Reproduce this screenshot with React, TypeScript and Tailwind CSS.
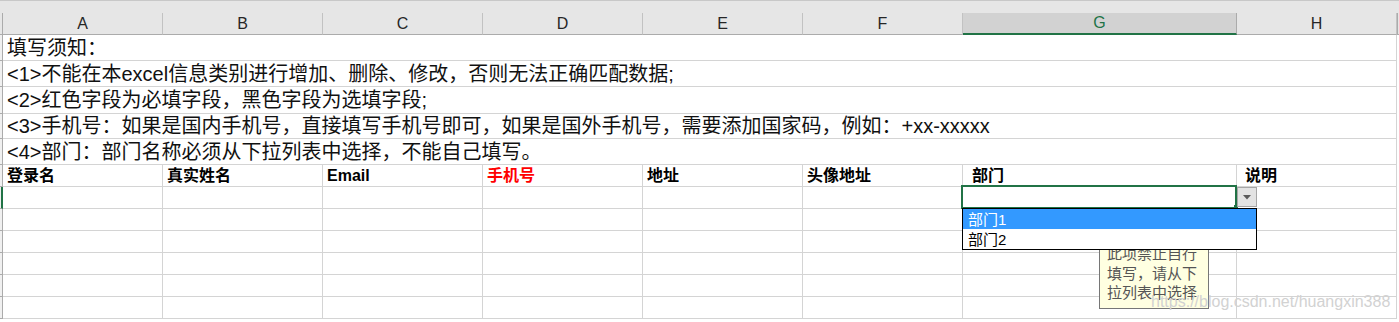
import React from 'react';

const FONT = '"Liberation Sans", "Noto Sans CJK SC", sans-serif';

const COLS = [
  { label: 'A', w: 'w-[160px]' },
  { label: 'B', w: 'w-[160px]' },
  { label: 'C', w: 'w-[160px]' },
  { label: 'D', w: 'w-[160px]' },
  { label: 'E', w: 'w-[160px]' },
  { label: 'F', w: 'w-[160px]' },
  { label: 'G', w: 'w-[274px]' },
  { label: 'H', w: 'w-[160px]' },
];

const NOTES = [
  '填写须知：',
  '<1>不能在本excel信息类别进行增加、删除、修改，否则无法正确匹配数据;',
  '<2>红色字段为必填字段，黑色字段为选填字段;',
  '<3>手机号：如果是国内手机号，直接填写手机号即可，如果是国外手机号，需要添加国家码，例如：+xx-xxxxx',
  '<4>部门：部门名称必须从下拉列表中选择，不能自己填写。',
];
const NOTE_HEIGHTS = ['h-[26px]', 'h-[26px]', 'h-[27px]', 'h-[25px]', 'h-[26px]'];

const FIELDS = [
  { text: '登录名', pad: 'pl-[4px]' },
  { text: '真实姓名', pad: 'pl-[4px]' },
  { text: 'Email', pad: 'pl-[4px]' },
  { text: '手机号', pad: 'pl-[4px]', red: true },
  { text: '地址', pad: 'pl-[4px]' },
  { text: '头像地址', pad: 'pl-[4px]' },
  { text: '部门', pad: 'pl-[9px]' },
  { text: '说明', pad: 'pl-[8px]' },
];

function RowHead({ selected }: { selected?: boolean }) {
  return (
    <div
      className={
        selected
          ? 'w-[3px] flex-none bg-[#f0f0f0] border-r-2 border-r-[#217346] border-b border-b-[#ababab]'
          : 'w-[3px] flex-none bg-[#f0f0f0] border-r border-b border-[#ababab]'
      }
    />
  );
}

function EmptyRow({ selected }: { selected?: boolean }) {
  return (
    <div className="flex h-[22px]">
      <RowHead selected={selected} />
      {COLS.map((c) => (
        <div key={c.label} className={`${c.w} flex-none border-r border-b border-[#d4d4d4]`} />
      ))}
    </div>
  );
}

export default function App() {
  return (
    <div
      className="relative w-[1399px] h-[322px] overflow-hidden bg-white text-black"
      style={{ fontFamily: FONT }}
    >
      {/* ribbon edge */}
      <div className="h-[13px] bg-[#e6e6e6] border-t border-[#c8c8c8]" />

      {/* column letters */}
      <div className="flex h-[22px] bg-[#e6e6e6]">
        <div className="w-[3px] flex-none border-r border-b border-[#ababab]" />
        {COLS.map((c) =>
          c.label === 'G' ? (
            <div
              key={c.label}
              className={`${c.w} flex-none flex items-center justify-center bg-[#d2d2d2] border-r border-r-[#ababab] border-b-2 border-b-[#217346] text-[16px] text-[#217346]`}
            >
              {c.label}
            </div>
          ) : (
            <div
              key={c.label}
              className={`${c.w} flex-none flex items-center justify-center border-r border-r-[#c2c2c2] border-b border-b-[#ababab] text-[16px] text-[#262626]`}
            >
              {c.label}
            </div>
          ),
        )}
        <div className="flex-1 border-l border-b border-[#ababab]" />
      </div>

      {/* merged instruction rows */}
      {NOTES.map((t, i) => (
        <div key={i} className={`flex ${NOTE_HEIGHTS[i]}`}>
          <RowHead />
          <div className="w-[1394px] flex-none flex items-center pl-[4px] border-r border-b border-[#d4d4d4] text-[20px] leading-none whitespace-nowrap text-[#111]">
            {t}
          </div>
        </div>
      ))}

      {/* field headers */}
      <div className="flex h-[22px]">
        <RowHead />
        {COLS.map((c, i) => (
          <div
            key={c.label}
            className={`${c.w} flex-none flex items-center ${FIELDS[i].pad} border-r border-b border-[#d4d4d4] text-[16px] font-bold leading-none ${
              FIELDS[i].red ? 'text-[#ff0000]' : 'text-black'
            }`}
          >
            {FIELDS[i].text}
          </div>
        ))}
      </div>

      <EmptyRow selected />
      <EmptyRow />
      <EmptyRow />
      <EmptyRow />
      <EmptyRow />
      <EmptyRow />

      {/* selected cell G7 */}
      <div className="absolute left-[961px] top-[185px] w-[276px] h-[24px] border-2 border-[#217346]" />
      <div className="absolute left-[1234px] top-[205px] w-[4px] h-[4px] bg-[#217346]" />

      {/* dropdown arrow button */}
      <div className="absolute left-[1237px] top-[187px] w-[20px] h-[20px] flex items-center justify-center bg-[#e3e3e3] border border-[#a6a6a6]">
        <svg width="8" height="5" viewBox="0 0 8 5">
          <path d="M0 0 H8 L4 4.5 Z" fill="#5a5a5a" />
        </svg>
      </div>

      {/* input message tooltip */}
      <div className="absolute left-[1099px] top-[239px] w-[110px] h-[70px] bg-[#ffffe1] border border-[#767676] pl-[7px] pt-[4px] text-[15px] leading-[19.5px] text-[#555]">
        <div>此项禁止自行</div>
        <div>填写，请从下</div>
        <div>拉列表中选择</div>
      </div>

      {/* dropdown list */}
      <div className="absolute left-[962px] top-[208px] w-[295px] h-[42px] bg-white border border-black text-[15px] leading-none">
        <div className="h-[20px] flex items-center pl-[5px] bg-[#3399ff] text-white">部门1</div>
        <div className="h-[20px] flex items-center pl-[5px] text-black">部门2</div>
      </div>

      {/* watermark */}
      <div className="absolute left-[1151px] top-[294px] text-[16px] leading-none text-[#d2d2d2] whitespace-nowrap">
        https://blog.csdn.net/huangxin388
      </div>
    </div>
  );
}
